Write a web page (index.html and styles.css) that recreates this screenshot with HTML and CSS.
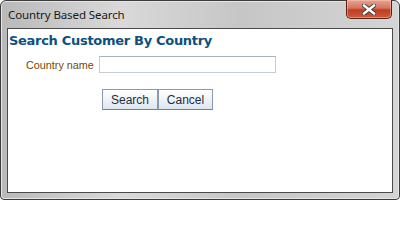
FILE: index.html
```html
<!DOCTYPE html>
<html>
<head>
<meta charset="utf-8">
<link rel="stylesheet" href="styles.css">
</head>
<body>
<div class="window">
  <div class="titlebar">
    <span class="title">Country Based Search</span>
    <button class="close" aria-label="Close">
      <svg width="14" height="11" viewBox="0 0 14 11">
        <path d="M2 1.5 L12 9.5 M12 1.5 L2 9.5" stroke="#3a3a3a" stroke-width="4.2" stroke-linecap="square"/>
        <path d="M2 1.5 L12 9.5 M12 1.5 L2 9.5" stroke="#ffffff" stroke-width="2.4" stroke-linecap="square"/>
      </svg>
    </button>
  </div>
  <div class="client">
    <h1 class="heading">Search Customer By Country</h1>
    <div class="field">
      <label class="label" for="country">Country name</label>
      <input class="input" id="country" type="text">
    </div>
    <div class="actions">
      <button class="btn">Search</button>
      <button class="btn">Cancel</button>
    </div>
  </div>
</div>
</body>
</html>
```
FILE: styles.css
```css
html, body {
  margin: 0;
  padding: 0;
  background: #ffffff;
}
.window {
  box-sizing: border-box;
  width: 400px;
  height: 200px;
  border: 1px solid #3c3c3c;
  border-radius: 6px 6px 4px 4px;
  background: linear-gradient(to right, #b9b9b9 0%, #d9d9d9 30%, #c6c6c6 60%, #d4d4d4 100%);
  box-shadow: inset 0 0 0 1px #e6e6e6;
  display: flex;
  flex-direction: column;
}
.titlebar {
  height: 27px;
  display: flex;
  justify-content: space-between;
  align-items: flex-start;
  padding: 0 7px 0 7px;
}
.title {
  font-family: "Noto Sans", "DejaVu Sans", sans-serif;
  font-size: 11.5px;
  color: #1a1a1a;
  margin-top: 6px;
  letter-spacing: -0.1px;
}
.close {
  width: 46px;
  height: 19px;
  margin: -1px 0 0 0;
  padding: 0;
  border: 1px solid #5a1f16;
  border-top: none;
  border-radius: 0 0 5px 5px;
  background: linear-gradient(to bottom, #e6a493 0%, #d5745e 45%, #c23d22 55%, #cc5a3c 100%);
  box-shadow: inset 0 0 0 1px rgba(255,210,190,0.45);
  display: flex;
  align-items: center;
  justify-content: center;
}
.client {
  flex: 1;
  margin: 0 6px 6px 6px;
  border: 1px solid #4a4a4a;
  background: #ffffff;
  padding: 4px 0;
}
.heading {
  margin: 0 0 0 1px;
  font-family: "DejaVu Sans", Verdana, sans-serif;
  font-size: 13px;
  font-weight: bold;
  color: #0d4f7e;
  line-height: 16px;
  letter-spacing: -0.3px;
}
.field {
  display: flex;
  align-items: center;
  margin-top: 7px;
  padding-left: 18px;
  gap: 5px;
}
.label {
  font-family: "Liberation Sans", Arial, sans-serif;
  font-size: 10.8px;
  color: #6f4a0c;
}
.input {
  box-sizing: border-box;
  width: 177px;
  height: 17px;
  border: 1px solid #c4ccd4;
  border-top-color: #a9b3be;
  padding: 0;
  margin: 0;
  background: #ffffff;
}
.actions {
  display: flex;
  margin-top: 16px;
  padding-left: 94px;
  gap: 0;
}
.btn {
  box-sizing: border-box;
  height: 21px;
  width: 56px;
  padding: 0;
  font-family: "Liberation Sans", Arial, sans-serif;
  font-size: 12px;
  color: #1f2d3d;
  border: 1px solid #8a9aac;
  border-bottom-color: #6f8197;
  border-radius: 0;
  background: linear-gradient(to bottom, #ffffff 0%, #f1f4f8 45%, #dde5ee 100%);
}
.btn + .btn {
  width: 55px;
}
```
